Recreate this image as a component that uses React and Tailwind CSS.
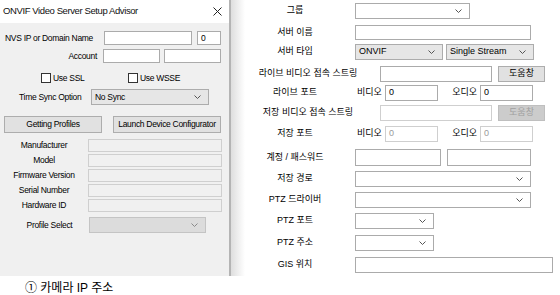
import React from "react";

const LF = "font-['Liberation_Sans',sans-serif]";
const RF = "font-['Liberation_Sans','Noto_Sans_CJK_KR',sans-serif]";

function Chevron({ color = "#555" }) {
  return (
    <svg width="7" height="4" viewBox="0 0 7 4" className="shrink-0">
      <path d="M0.5 0.5 L3.5 3.5 L6.5 0.5" stroke={color} fill="none" strokeWidth="1" />
    </svg>
  );
}

function Input({ w, value, disabled, bg }) {
  return (
    <div
      className={`${w} h-full border flex items-center pl-[3px] ${
        disabled ? "border-[#cfcfcf] text-[#9a9a9a]" : "border-[#ababab] text-black"
      } ${bg || "bg-white"}`}
    >
      {value}
    </div>
  );
}

function Select({ w, value, gray, disabled }) {
  return (
    <div
      className={`${w} h-full border flex items-center justify-between pl-[3px] pr-[7px] ${
        disabled
          ? "bg-[#dcdcdc] border-[#c4c4c4]"
          : gray
          ? "bg-[#e6e6e6] border-[#acacac]"
          : "bg-white border-[#ababab]"
      }`}
    >
      <span>{value}</span>
      <Chevron color={disabled ? "#8a8a8a" : "#555"} />
    </div>
  );
}

function LeftDialog() {
  const infoRows = ["Manufacturer", "Model", "Firmware Version", "Serial Number", "Hardware ID"];
  return (
    <div className={`w-[229px] h-[276px] flex flex-col text-[8.5px] tracking-[-0.3px] text-black whitespace-nowrap ${LF}`}>
      <div className="h-[23px] bg-white flex items-center justify-between pl-[3px] pr-[7px] text-[9.5px] tracking-[-0.4px] text-[#111]">
        <span>ONVIF Video Server Setup Advisor</span>
        <svg width="9" height="9" viewBox="0 0 9 9">
          <path d="M0.5 0.5 L8.5 8.5 M8.5 0.5 L0.5 8.5" stroke="#222" strokeWidth="1" />
        </svg>
      </div>
      <div className="flex-1 bg-[#f0f0f0] flex flex-col">
        <div className="mt-[8px] h-[14px] flex items-center">
          <div className="w-[104px] pl-[5px]">NVS IP or Domain Name</div>
          <Input w="w-[88px]" />
          <div className="w-[5px]" />
          <Input w="w-[24px]" value="0" />
        </div>
        <div className="mt-[4px] h-[14px] flex items-center">
          <div className="w-[103px] pr-[6px] text-right">Account</div>
          <Input w="w-[57px]" />
          <div className="w-[4px]" />
          <Input w="w-[57px]" />
        </div>
        <div className="mt-[10px] h-[10px] flex items-center pl-[41px]">
          <div className="w-[87px] flex items-center">
            <div className="w-[10px] h-[10px] border border-[#333] bg-white" />
            <span className="ml-[2px]">Use SSL</span>
          </div>
          <div className="flex items-center">
            <div className="w-[10px] h-[10px] border border-[#333] bg-white" />
            <span className="ml-[2px]">Use WSSE</span>
          </div>
        </div>
        <div className="mt-[6px] h-[16px] flex items-center">
          <div className="w-[91px] pl-[19px]">Time Sync Option</div>
          <Select w="w-[118px]" value="No Sync" gray />
        </div>
        <div className="mt-[11px] h-[17px] flex items-center pl-[4px]">
          <div className="w-[98px] h-full bg-[#e1e1e1] border border-[#adadad] flex items-center justify-center">
            Getting Profiles
          </div>
          <div className="w-[11px]" />
          <div className="w-[108px] h-full bg-[#e1e1e1] border border-[#adadad] flex items-center justify-center">
            Launch Device Configurator
          </div>
        </div>
        <div className="mt-[6px] flex flex-col gap-[2px]">
          {infoRows.map((r) => (
            <div key={r} className="h-[13px] flex items-center">
              <div className="w-[88px] text-center">{r}</div>
              <Input w="w-[134px]" disabled bg="bg-[#f0f0f0]" />
            </div>
          ))}
        </div>
        <div className="mt-[5px] h-[16px] flex items-center">
          <div className="w-[89px] pl-[10px] text-center">Profile Select</div>
          <Select w="w-[117px]" disabled />
        </div>
      </div>
    </div>
  );
}

function Label({ children, wide }) {
  return (
    <div className={`${wide ? "w-[149px] pl-[5px]" : "w-[124px] pl-[4px]"} text-center whitespace-nowrap`}>
      {children}
    </div>
  );
}

function RightPanel() {
  return (
    <div
      className={`flex-1 h-[276px] bg-[linear-gradient(to_right,#dedede,#ffffff_14px)] flex flex-col text-[9px] text-black ${RF}`}
    >
      <div className="mt-[3px] h-[16px] flex items-center">
        <Label>그룹</Label>
        <Select w="w-[115px]" />
      </div>
      <div className="mt-[6px] h-[15px] flex items-center">
        <Label>서버 이름</Label>
        <Input w="w-[176px]" />
      </div>
      <div className="mt-[4px] h-[16px] flex items-center">
        <Label>서버 타입</Label>
        <Select w="w-[88px]" value="ONVIF" gray />
        <div className="w-[3px]" />
        <Select w="w-[88px]" value="Single Stream" gray />
      </div>
      <div className="mt-[6px] h-[16px] flex items-center">
        <Label wide>라이브 비디오 접속 스트링</Label>
        <Input w="w-[112px]" />
        <div className="w-[6px]" />
        <div className="w-[47px] h-full bg-[#e1e1e1] border border-[#adadad] flex items-center justify-center">
          도움창
        </div>
      </div>
      <div className="mt-[3px] h-[16px] flex items-center">
        <Label>라이브 포트</Label>
        <div className="w-[30px] pl-[2px]">비디오</div>
        <Input w="w-[53px]" value="0" />
        <div className="w-[42px] pr-[3px] text-right">오디오</div>
        <Input w="w-[53px]" value="0" />
      </div>
      <div className="mt-[4px] h-[16px] flex items-center">
        <Label wide>저장 비디오 접속 스트링</Label>
        <Input w="w-[112px]" disabled />
        <div className="w-[6px]" />
        <div className="w-[47px] h-full bg-[#cccccc] border border-[#bfbfbf] text-[#a0a0a0] flex items-center justify-center">
          도움창
        </div>
      </div>
      <div className="mt-[5px] h-[16px] flex items-center">
        <Label>저장 포트</Label>
        <div className="w-[30px] pl-[2px]">비디오</div>
        <Input w="w-[53px]" value="0" disabled />
        <div className="w-[42px] pr-[3px] text-right">오디오</div>
        <Input w="w-[53px]" value="0" disabled />
      </div>
      <div className="mt-[7px] h-[17px] flex items-center">
        <Label>계정 / 패스워드</Label>
        <Input w="w-[86px]" />
        <div className="w-[6px]" />
        <Input w="w-[84px]" />
      </div>
      <div className="mt-[5px] h-[16px] flex items-center">
        <Label>저장 경로</Label>
        <Select w="w-[176px]" />
      </div>
      <div className="mt-[5px] h-[16px] flex items-center">
        <Label>PTZ 드라이버</Label>
        <Select w="w-[176px]" />
      </div>
      <div className="mt-[5px] h-[16px] flex items-center">
        <Label>PTZ 포트</Label>
        <Select w="w-[79px]" />
      </div>
      <div className="mt-[6px] h-[16px] flex items-center">
        <Label>PTZ 주소</Label>
        <Select w="w-[79px]" />
      </div>
      <div className="mt-[6px] h-[16px] flex items-center">
        <Label>GIS 위치</Label>
        <Input w="w-[198px]" />
      </div>
    </div>
  );
}

export default function App() {
  return (
    <div className="w-[560px] h-[295px] bg-white overflow-hidden flex flex-col">
      <div className="flex h-[276px]">
        <LeftDialog />
        <div className="w-[2px] h-full bg-[#b4b4b4]" />
        <RightPanel />
      </div>
      <div className={`mt-[6px] pl-[25px] text-[12px] leading-[13px] text-black ${RF}`}>
        ① 카메라 IP 주소
      </div>
    </div>
  );
}
